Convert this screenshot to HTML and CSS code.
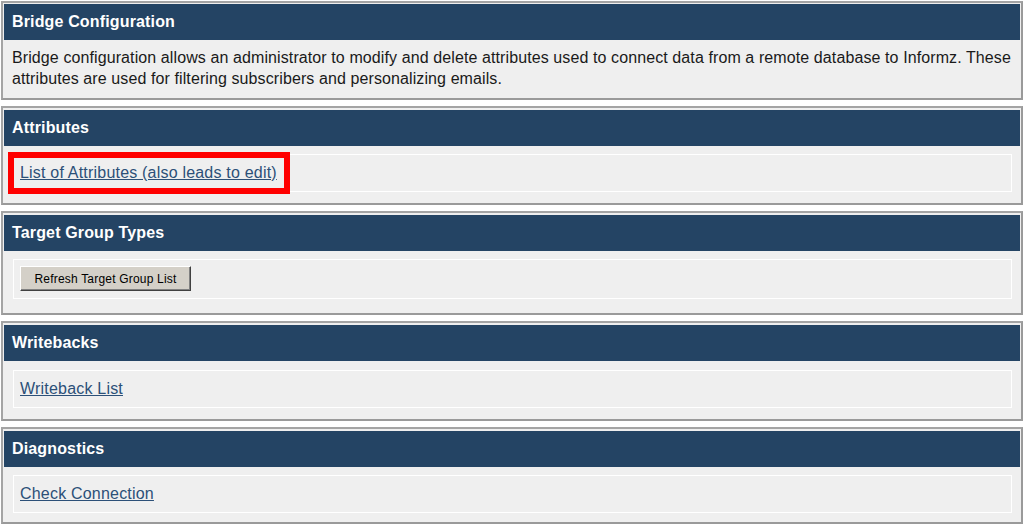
FILE: index.html
```html
<!DOCTYPE html>
<html>
<head>
<meta charset="utf-8">
<title>Bridge Configuration</title>
<link rel="stylesheet" href="styles.css">
</head>
<body>
<div class="page">
  <section class="panel panel-first">
    <div class="panel-head">Bridge Configuration</div>
    <div class="panel-text">Bridge configuration allows an administrator to modify and delete attributes used to connect data from a remote database to Informz. These attributes are used for filtering subscribers and personalizing emails.</div>
  </section>

  <section class="panel">
    <div class="panel-head">Attributes</div>
    <div class="panel-body panel-body-tight">
      <div class="row highlighted">
        <a href="#" class="link">List of Attributes (also leads to edit)</a>
        <span class="marker"></span>
      </div>
    </div>
  </section>

  <section class="panel">
    <div class="panel-head">Target Group Types</div>
    <div class="panel-body panel-body-button">
      <div class="row row-button">
        <button class="btn" type="button">Refresh Target Group List</button>
      </div>
    </div>
  </section>

  <section class="panel">
    <div class="panel-head">Writebacks</div>
    <div class="panel-body panel-body-low">
      <div class="row">
        <a href="#" class="link">Writeback List</a>
      </div>
    </div>
  </section>

  <section class="panel">
    <div class="panel-head">Diagnostics</div>
    <div class="panel-body panel-body-last">
      <div class="row">
        <a href="#" class="link">Check Connection</a>
      </div>
    </div>
  </section>
</div>
</body>
</html>
```

FILE: styles.css
```css
html, body {
  margin: 0;
  padding: 0;
  background: #ffffff;
}

body {
  font-family: "Liberation Sans", Arial, sans-serif;
  font-size: 16px;
  color: #1a1a1a;
  letter-spacing: 0.2px;
}

.page {
  display: flex;
  flex-direction: column;
  gap: 6px;
  padding: 1px 1px 0 1px;
}

.panel {
  border: 2px solid;
  border-color: #a4a4a4 #9a9a9a #9a9a9a #a4a4a4;
  background: #efefef;
  padding: 2px 1px 1px 1px;
}

.panel-first {
  padding-top: 1px;
}

.panel-head {
  background: #244464;
  color: #ffffff;
  font-weight: bold;
  font-size: 16px;
  height: 36px;
  line-height: 35px;
  padding-left: 8px;
  letter-spacing: 0.15px;
}

.panel-text {
  padding: 7px 4px 8px 8px;
  line-height: 21px;
  letter-spacing: 0.1px;
}

.panel-body {
  padding: 8px 8px 12px 9px;
}

.panel-body-tight {
  padding-bottom: 10px;
}

.panel-body-button {
  padding-bottom: 13px;
}

.panel-body-low {
  padding-top: 9px;
  padding-bottom: 10px;
}

.panel-body-last {
  padding-bottom: 8px;
}

.row {
  position: relative;
  border: 1px solid #ffffff;
  padding: 8px 6px;
  line-height: 20px;
}

.row-button {
  padding: 6px 6px 7px 6px;
}

.link {
  color: #2c5078;
  text-decoration: underline;
}

.marker {
  position: absolute;
  left: -6px;
  top: -3px;
  width: 270px;
  height: 30px;
  border: 6px solid #ff0000;
  pointer-events: none;
}

.btn {
  font-family: "Liberation Sans", Tahoma, sans-serif;
  font-size: 12px;
  letter-spacing: 0.2px;
  color: #000000;
  background: #d4d0c8;
  height: 25px;
  padding: 0 12px;
  border: 1px solid;
  border-color: #ffffff #404040 #404040 #ffffff;
  box-shadow: inset -1px -1px 0 #808080;
  width: 171px;
}
```
